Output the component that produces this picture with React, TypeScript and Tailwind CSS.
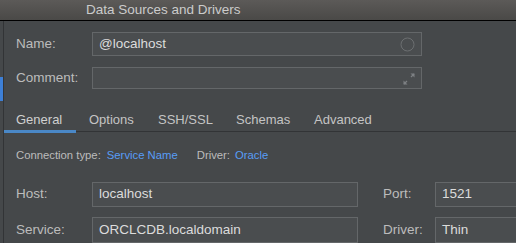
import React from "react";

const font = { fontFamily: '"Liberation Sans", Arial, sans-serif' };

function Input({ value, className = "", children }: { value?: string; className?: string; children?: React.ReactNode }) {
  return (
    <div className={`relative flex items-center border border-[#646769] bg-[#4a4d4f] pl-[6px] text-[13.5px] text-[#dcdcdc] ${className}`}>
      {value}
      {children}
    </div>
  );
}

const tabs = [
  { t: "General", w: "w-[72px] pl-[12px]" },
  { t: "Options", w: "w-[69px] pl-[13px]" },
  { t: "SSH/SSL", w: "w-[78px] pl-[13px]" },
  { t: "Schemas", w: "w-[78px] pl-[13px]" },
  { t: "Advanced", w: "w-[82px] pl-[13px]" },
];

export default function App() {
  return (
    <div className="w-[516px] h-[243px] overflow-hidden bg-[#45484a] flex flex-col" style={font}>
      <div className="h-[21px] shrink-0 border-b border-black bg-gradient-to-b from-[#5c5a58] to-[#4a4947] flex items-center">
        <div className="ml-[86px] text-[13.5px] text-[#cbcbcb] leading-none">Data Sources and Drivers</div>
      </div>
      <div className="flex flex-1 min-h-0">
        <div className="w-[3px] shrink-0 flex flex-col">
          <div className="h-[56px]" />
          <div className="h-[24px] bg-[#3d7fd6]" />
        </div>
        <div className="flex-1 border-l border-[#323436] flex flex-col">
          <div className="flex flex-col pt-[11px] gap-[11px]">
            <div className="flex items-center">
              <div className="w-[88px] pl-[12px] text-[13.5px] text-[#bcbcbc]">Name:</div>
              <Input value="@localhost" className="w-[330px] h-[24px]">
                <svg className="absolute right-[6px] top-[4px]" width="15" height="15" viewBox="0 0 15 15">
                  <circle cx="7.5" cy="7.5" r="6.5" fill="none" stroke="#6c6f71" strokeWidth="1" />
                </svg>
              </Input>
            </div>
            <div className="flex items-center">
              <div className="w-[88px] pl-[12px] text-[13.5px] text-[#bcbcbc]">Comment:</div>
              <Input className="w-[330px] h-[22px]">
                <svg className="absolute right-[5px] top-[4px]" width="14" height="14" viewBox="0 0 14 14">
                  <path d="M8.5 1.5 L12.5 1.5 L12.5 5.5 Z" fill="#7d8083" />
                  <path d="M12 2 L9 5" stroke="#7d8083" strokeWidth="1.2" />
                  <path d="M1.5 8.5 L1.5 12.5 L5.5 12.5 Z" fill="#7d8083" />
                  <path d="M2 12 L5 9" stroke="#7d8083" strokeWidth="1.2" />
                </svg>
              </Input>
            </div>
          </div>
          <div className="mt-[14px] flex border-b border-[#323436] h-[33px]">
            {tabs.map(({ t, w }, i) => (
              <div
                key={t}
                className={`relative flex items-center whitespace-nowrap pt-[6px] text-[13px] ${w} ${i === 0 ? "text-[#d0d0d0]" : "text-[#c4c4c4]"}`}
              >
                {t}
                {i === 0 && <div className="absolute left-0 right-0 bottom-[-2px] h-[3px] bg-[#4a88c7]" />}
              </div>
            ))}
          </div>
          <div className="mt-[18px] flex items-center pl-[12px] text-[11.3px] leading-none">
            <span className="text-[#bcbcbc]">Connection type:</span>
            <span className="ml-[6px] text-[#589df6]">Service Name</span>
            <span className="ml-[19px] text-[#bcbcbc]">Driver:</span>
            <span className="ml-[5px] text-[#589df6]">Oracle</span>
          </div>
          <div className="mt-[21px] flex flex-col gap-[10px]">
            <div className="flex items-center">
              <div className="w-[88px] pl-[12px] text-[13.5px] text-[#bcbcbc]">Host:</div>
              <Input value="localhost" className="w-[266px] h-[25px]" />
              <div className="w-[77px] pl-[25px] text-[13.5px] text-[#bcbcbc]">Port:</div>
              <Input value="1521" className="w-[100px] h-[25px]" />
            </div>
            <div className="flex items-center">
              <div className="w-[88px] pl-[12px] text-[13.5px] text-[#bcbcbc]">Service:</div>
              <Input value="ORCLCDB.localdomain" className="w-[266px] h-[26px]" />
              <div className="w-[77px] pl-[25px] text-[13.5px] text-[#bcbcbc]">Driver:</div>
              <Input value="Thin" className="w-[100px] h-[26px]" />
            </div>
          </div>
        </div>
      </div>
    </div>
  );
}
